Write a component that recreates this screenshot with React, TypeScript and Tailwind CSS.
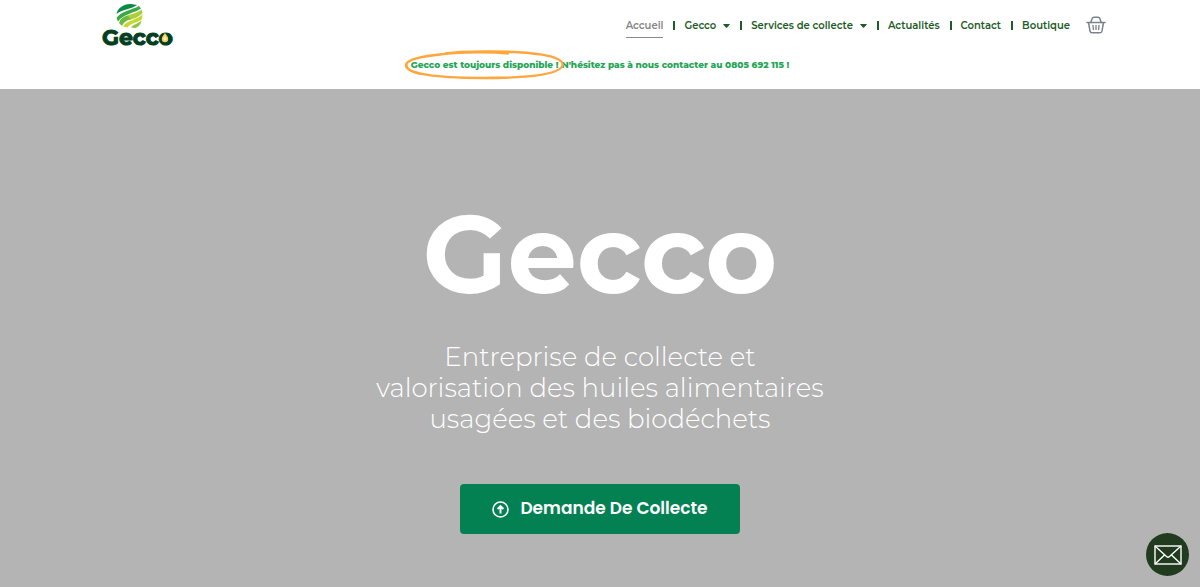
import React from 'react';

interface NavItem {
  label: string;
  active?: boolean;
  hasMenu?: boolean;
}

const navItems: NavItem[] = [
  { label: 'Accueil', active: true },
  { label: 'Gecco', hasMenu: true },
  { label: 'Services de collecte', hasMenu: true },
  { label: 'Actualités' },
  { label: 'Contact' },
  { label: 'Boutique' },
];

const Logo: React.FC = () => (
  <a href="#" aria-label="Gecco" className="block shrink-0">
    <svg width="76" height="50" viewBox="0 0 76 50">
      <path d="M14.5 14C15.5 8 22 3.5 29 4L35 5C30 9 21 9 14.5 14Z" fill="#0b8a45" />
      <path d="M14.5 18C19 11 30 10 37 6L39 8.5C33 13 21 14 16 21.5Z" fill="#3aa845" />
      <path d="M25 15.5C31 14 36 12.5 39.5 9.5L40.5 13C37 17 33 18.5 27 20Z" fill="#a9cf3a" />
      <path d="M17 23C18 19 21 17 25 15.5L29 19C24 20.5 21 23 20 26Z" fill="#6fba3f" />
      <path d="M21 26.5C25 20 35 20 40.5 14.5L40 19C37 23 29 22 25.5 27.5Z" fill="#c5d92d" />
      <path d="M29 27.5C32 24 37 23.5 39.5 20.5C39 24 37 26.5 33.5 28Z" fill="#8cc63f" />
      <text
        x="0"
        y="45"
        fontSize="22"
        fontWeight="700"
        fill="#033f20"
        stroke="#033f20"
        strokeWidth="1"
        strokeLinejoin="round"
        className="font-['Montserrat',sans-serif]"
      >
        Gecco
      </text>
      <circle cx="63" cy="39" r="5" fill="#033f20" />
      <path d="M63 33C65 35.5 66.2 37 66.2 39A3.2 3.2 0 0 1 59.8 39C59.8 37 61 35.5 63 33Z" fill="#f6c75a" />
      <path d="M63 36C64 37.5 64.6 38 64.6 39A1.6 1.6 0 0 1 61.4 39C61.4 38 62 37.5 63 36Z" fill="#fff3c4" />
    </svg>
  </a>
);

const BasketIcon: React.FC = () => (
  <svg
    width="20"
    height="18"
    viewBox="0 0 20 18"
    fill="none"
    stroke="#7b838d"
    strokeWidth="1.5"
    strokeLinecap="round"
    strokeLinejoin="round"
  >
    <path d="M1 6.5H19M2.5 6.5L4 15Q4.3 16.8 6 16.8H14Q15.7 16.8 16 15L17.5 6.5" />
    <path d="M4.8 6.5L6.2 2.4Q6.6 1.2 7.8 1.2H12.2Q13.4 1.2 13.8 2.4L15.2 6.5" />
    <path d="M7 9.5L7.4 13.5M10 9.5V13.5M13 9.5L12.6 13.5" strokeWidth="1.3" />
  </svg>
);

const NavBar: React.FC = () => (
  <div className="flex items-center">
    <nav>
      <ul className="flex items-center">
        {navItems.map((item, index) => (
          <li key={item.label} className="flex items-center">
            {index > 0 && <span className="mr-[9px] ml-[10px] h-[9px] w-[2px] bg-[#1d5c26]" />}
            <a
              href="#"
              className={`flex h-[26px] items-center border-b pt-[2px] text-[10px] font-semibold ${
                item.active ? 'border-[#8a8a8a] text-[#858585]' : 'border-transparent text-[#1d5c26]'
              }`}
            >
              {item.label}
              {item.hasMenu && (
                <svg width="7" height="4" viewBox="0 0 7 4" className="ml-[7px]">
                  <path d="M0.4 0H6.6Q7 0.4 6.6 0.8L3.9 3.7Q3.5 4 3.1 3.7L0.4 0.8Q0 0.4 0.4 0Z" fill="currentColor" />
                </svg>
              )}
            </a>
          </li>
        ))}
      </ul>
    </nav>
    <button type="button" aria-label="Panier" className="ml-4">
      <BasketIcon />
    </button>
  </div>
);

const Announcement: React.FC = () => (
  <p className="flex h-[39px] justify-center text-[9px] leading-[30px] font-extrabold whitespace-nowrap text-[#26a555]">
    <span className="relative">
      Gecco est toujours disponible !
      <svg
        viewBox="0 0 164 30"
        preserveAspectRatio="none"
        fill="none"
        stroke="#ffa63d"
        className="absolute top-0 -left-[7px] h-[30px] w-[calc(100%+13px)]"
      >
        <path
          d="M107 3.5C88 1.5 58 2 41 4C19 6 3 9 2 15C1 22 25 28 80 28C130 28 160 24 162 15C162 6 132 1 82 1.5C66 1.5 52 2 42 3.5"
          strokeWidth="2.4"
        />
        <path d="M3 12C1 18 6 22 17 24" strokeWidth="2" />
      </svg>
    </span>
    <span className="ml-[3px]">N'hésitez pas à nous contacter au 0805 692 115 !</span>
  </p>
);

const Header: React.FC = () => (
  <header className="bg-white">
    <div className="mx-auto flex h-[50px] w-full max-w-[1024px] items-center justify-between pr-[6px] pl-[14px]">
      <Logo />
      <NavBar />
    </div>
    <Announcement />
  </header>
);

const Hero: React.FC = () => (
  <main className="flex flex-1 flex-col items-center bg-[#b4b4b4] px-4 pt-[109px] pb-[53px] text-center text-white">
    <h1 className="text-[110px] leading-[112px] font-bold">Gecco</h1>
    <p className="mt-[32px] max-w-[500px] text-[26px] leading-[31px] font-light">
      Entreprise de collecte et
      <br />
      valorisation des huiles alimentaires
      <br />
      usagées et des biodéchets
    </p>
    <button
      type="button"
      className="mt-[49px] flex h-[50px] items-center rounded-[4px] bg-[#038153] px-[32px] font-['Poppins','Montserrat',sans-serif] text-[17px] font-semibold"
    >
      <svg width="17" height="17" viewBox="0 0 17 17" fill="none" stroke="currentColor" className="mr-[11px]">
        <circle cx="8.5" cy="8.5" r="7.5" strokeWidth="1.6" />
        <path d="M8.5 12.4V5.4M5.6 8L8.5 5.1L11.4 8" strokeWidth="2" />
      </svg>
      Demande De Collecte
    </button>
  </main>
);

const ContactBubble: React.FC = () => (
  <button
    type="button"
    aria-label="Nous écrire"
    className="fixed right-[11px] bottom-[11px] flex size-[43px] items-center justify-center rounded-full bg-[#213b1f]"
  >
    <svg width="28" height="20" viewBox="0 0 28 20" fill="none" stroke="#ffffff" strokeWidth="1.4">
      <rect x="1" y="1" width="26" height="18" />
      <path d="M1 1L12.5 11.5Q14 12.8 15.5 11.5L27 1M1 19L10.5 10M27 19L17.5 10" />
    </svg>
  </button>
);

export default function App() {
  return (
    <div className="flex min-h-screen flex-col font-['Montserrat','Inter',sans-serif]">
      <Header />
      <Hero />
      <ContactBubble />
    </div>
  );
}
